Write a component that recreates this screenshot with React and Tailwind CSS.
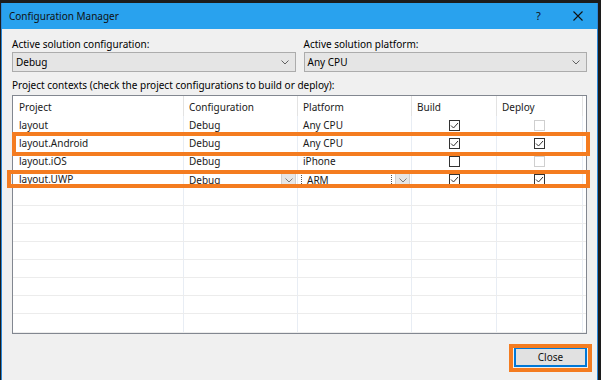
import React from "react";

// Configuration Manager dialog (VS style), 601x380 capture
const font = { fontFamily: '"Noto Sans", "Open Sans", sans-serif' };

const rows = [
  { project: "layout", config: "Debug", platform: "Any CPU", build: true, deploy: false, deployOff: true },
  { project: "layout.Android", config: "Debug", platform: "Any CPU", build: true, deploy: true },
  { project: "layout.iOS", config: "Debug", platform: "iPhone", build: false, deploy: false, deployOff: true },
  { project: "layout.UWP", config: "Debug", platform: "ARM", build: true, deploy: true, editing: true },
];

function Chevron({ color = "#606060" }) {
  return (
    <svg width="8" height="5" viewBox="0 0 8 5">
      <polyline points="0.5,0.5 4,4 7.5,0.5" fill="none" stroke={color} strokeWidth="1" />
    </svg>
  );
}

function Check({ checked, disabled }) {
  return (
    <div
      className={`w-[11px] h-[11px] border bg-white flex items-center justify-center ${
        disabled ? "border-[#cfcfcf]" : "border-[#333333]"
      }`}
    >
      {checked && (
        <svg width="9" height="9" viewBox="0 0 9 9">
          <polyline points="1,4.5 3.5,7 8,2" fill="none" stroke="#333333" strokeWidth="1" />
        </svg>
      )}
    </div>
  );
}

function Combo({ value }) {
  return (
    <div className="h-[20px] bg-[#e5e5e5] border border-[#acacac] flex items-center justify-between pl-[3px] pr-[6px]">
      <span>{value}</span>
      <Chevron />
    </div>
  );
}

function CellCombo({ value, focus }) {
  return (
    <div className="flex items-center h-[16px] w-full bg-white">
      <div
        className={`flex-1 h-full flex items-center pl-[5px] ${
          focus ? "border-r border-l border-dotted border-[#555] ml-[3px] pl-[2px] mr-[3px]" : ""
        }`}
      >
        {value}
      </div>
      <div className="w-[15px] h-full bg-[#e6e6e6] border border-[#cfcfcf] flex items-center justify-center">
        <Chevron color="#7a7a7a" />
      </div>
    </div>
  );
}

const line = "border-r border-[#e8edf4]";

export default function App() {
  return (
    <div className="relative w-[601px] h-[380px] bg-[#1c1c1c] pt-[3px] pl-[1px] pr-[3px] flex text-[10px] leading-[14px] text-black overflow-hidden" style={font}>
      <div className="flex-1 flex flex-col border-l border-r border-[#2b87d8]">
        {/* title bar */}
        <div className="h-[26px] bg-[#29a2ee] flex items-center pl-[7px]">
          <span className="flex-1 text-[#111]">Configuration Manager</span>
          <div className="w-[39px] flex justify-center text-[11px] text-[#111]">?</div>
          <div className="w-[39px] flex justify-center">
            <svg width="10" height="10" viewBox="0 0 10 10">
              <path d="M0.5 0.5 L9.5 9.5 M9.5 0.5 L0.5 9.5" stroke="#111" strokeWidth="1.1" />
            </svg>
          </div>
        </div>

        {/* body */}
        <div className="flex-1 bg-[#f0f0f0] px-[10px] pt-[8px] flex flex-col">
          <div className="grid grid-cols-2 gap-x-[8px]">
            <div>
              <div>Active solution configuration:</div>
              <div className="mt-[1px]">
                <Combo value="Debug" />
              </div>
            </div>
            <div>
              <div>Active solution platform:</div>
              <div className="mt-[1px]">
                <Combo value="Any CPU" />
              </div>
            </div>
          </div>

          <div className="mt-[6px]">Project contexts (check the project configurations to build or deploy):</div>

          {/* grid */}
          <div className="mt-[3px] h-[239px] border border-[#828790] bg-white flex flex-col text-[#1a1a1a]">
            <div className="h-[20px] flex items-center shrink-0">
              <div className="w-[171px] h-full pl-[6px] pt-[4px] border-r border-[#e3e3e3]">Project</div>
              <div className="w-[114px] h-full pl-[5px] pt-[4px] border-r border-[#e3e3e3]">Configuration</div>
              <div className="w-[114px] h-full pl-[5px] pt-[4px] border-r border-[#e3e3e3]">Platform</div>
              <div className="w-[85px] h-full pl-[5px] pt-[4px] border-r border-[#e3e3e3]">Build</div>
              <div className="w-[86px] h-full pl-[5px] pt-[4px] border-r border-[#e3e3e3]">Deploy</div>
            </div>

            {rows.map((r) => (
              <div key={r.project} className="h-[18px] flex shrink-0">
                <div className={`w-[171px] pl-[6px] pt-[2px] ${line}`}>{r.project}</div>
                <div className={`w-[114px] ${r.editing ? "pt-[2px] pl-0 pr-[1px]" : "pl-[5px] pt-[2px]"} ${line}`}>
                  {r.editing ? <CellCombo value={r.config} /> : r.config}
                </div>
                <div className={`w-[114px] ${r.editing ? "pt-[2px] pr-[1px]" : "pl-[5px] pt-[2px]"} ${line}`}>
                  {r.editing ? <CellCombo value={r.platform} focus /> : r.platform}
                </div>
                <div className={`w-[85px] flex items-center justify-center ${line}`}>
                  <Check checked={r.build} />
                </div>
                <div className={`w-[86px] flex items-center justify-center ${line}`}>
                  <Check checked={r.deploy} disabled={r.deployOff} />
                </div>
              </div>
            ))}

            {[0, 1, 2, 3, 4, 5, 6, 7].map((i) => (
              <div
                key={i}
                className={`flex ${i === 7 ? "flex-1" : "h-[18px] shrink-0"} border-b border-[#ececec]`}
              >
                <div className={`w-[171px] ${line}`} />
                <div className={`w-[114px] ${line}`} />
                <div className={`w-[114px] ${line}`} />
                <div className={`w-[85px] ${line}`} />
                <div className={`w-[86px] ${line}`} />
              </div>
            ))}
          </div>

          <div className="flex justify-end mt-[13px]">
            <button className="w-[73px] h-[20px] bg-[#e1e1e1] border-2 border-[#0078d7] flex items-center justify-center text-[#111]">
              Close
            </button>
          </div>
        </div>
      </div>

      {/* orange annotation boxes */}
      <div className="absolute left-[12px] top-[132px] w-[578px] h-[24px] border-4 border-[#f47c20]" />
      <div className="absolute left-[7px] top-[170px] w-[583px] h-[18px] border-4 border-[#f47c20]" />
      <div className="absolute left-[509px] top-[344px] w-[83px] h-[28px] border-4 border-[#f47c20]" />
    </div>
  );
}
